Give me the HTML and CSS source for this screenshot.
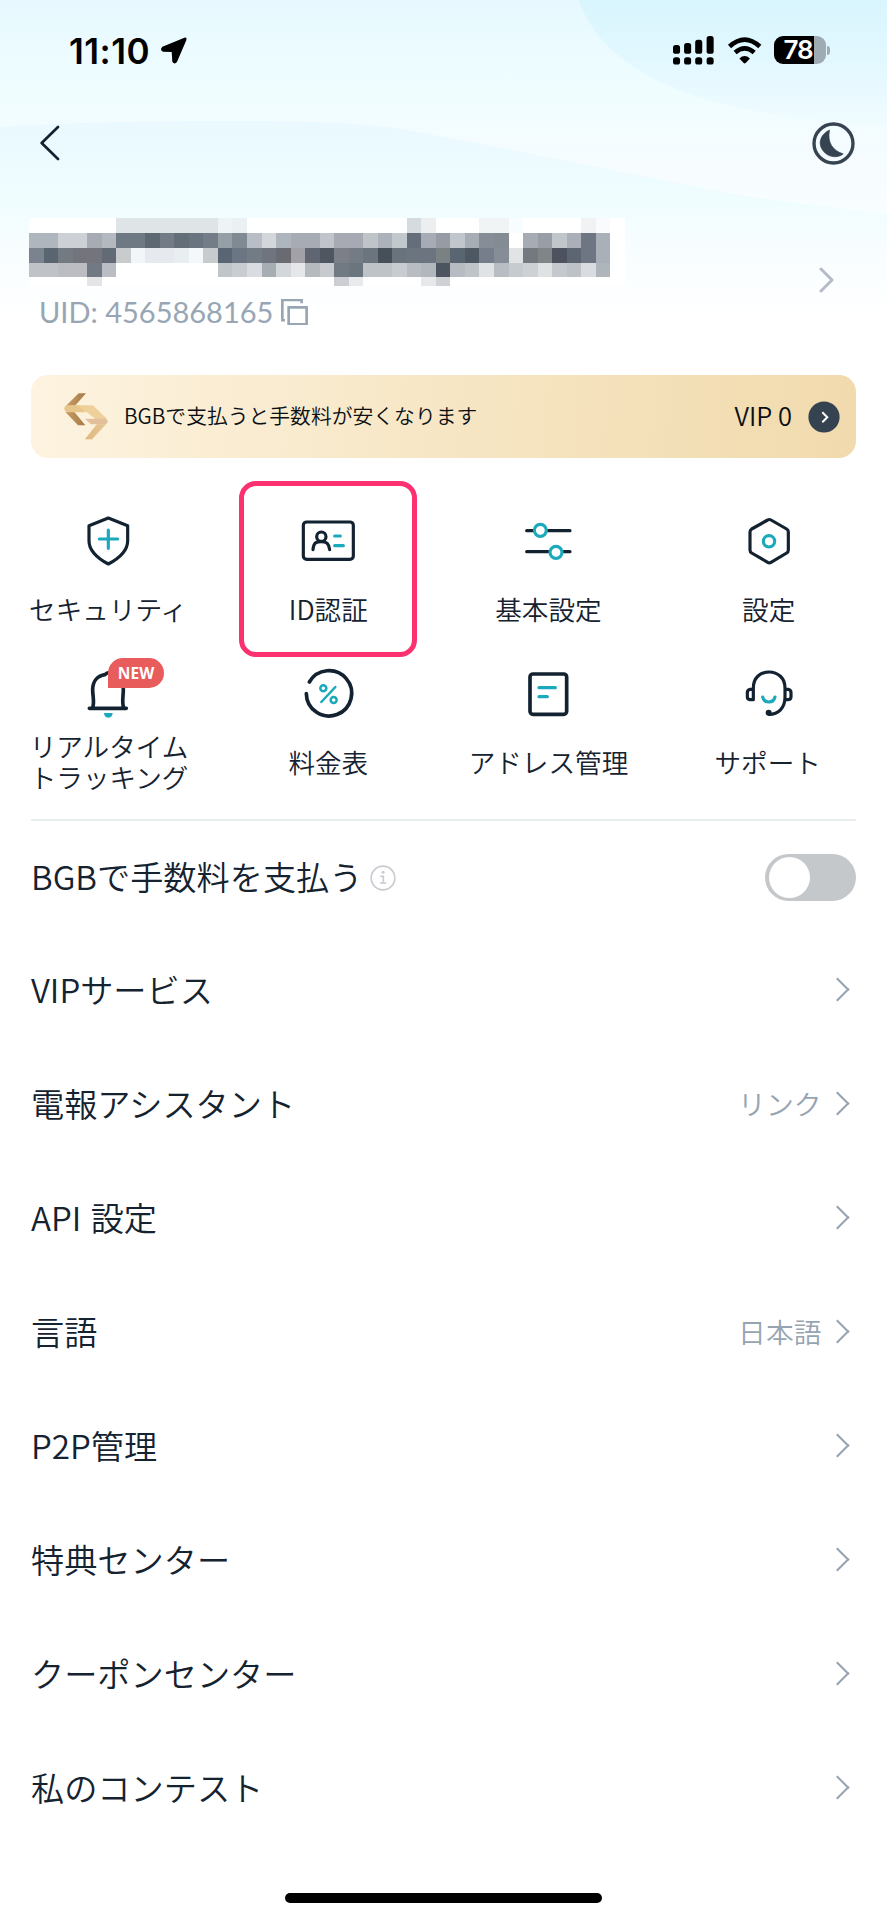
FILE: index.html
```html
<!DOCTYPE html>
<html lang="ja">
<head>
<meta charset="utf-8">
<title>アカウント</title>
<link rel="stylesheet" href="styles.css">
</head>
<body>
<div class="screen">
  <svg class="backdrop" viewBox="0 0 887 330" width="887" height="330" aria-hidden="true">
    <defs>
      <linearGradient id="sky" x1="0" y1="0" x2="0" y2="1"><stop offset="0" stop-color="#e7f9ff"/><stop offset=".28" stop-color="#effdff"/><stop offset=".45" stop-color="#f5fcff"/><stop offset=".95" stop-color="#fff"/></linearGradient>
      <linearGradient id="wave" gradientUnits="userSpaceOnUse" x1="0" y1="120" x2="0" y2="320"><stop offset="0" stop-color="#eaf9ff"/><stop offset=".4" stop-color="#effdff"/><stop offset=".6" stop-color="#f7fdff"/><stop offset="1" stop-color="#fff"/></linearGradient>
      <linearGradient id="orb" gradientUnits="userSpaceOnUse" x1="0" y1="0" x2="0" y2="130"><stop offset="0" stop-color="#d9f5fe"/><stop offset=".5" stop-color="#e3f8ff"/><stop offset="1" stop-color="#f1fcff"/></linearGradient>
    </defs>
    <rect width="887" height="330" fill="url(#sky)"/>
    <path d="M578 0C595 42 625 68 679 90C740 113 810 122 887 124V0Z" fill="url(#orb)"/>
    <path d="M0 127C70 122 150 121 226 121C300 121 350 122 400 129C520 150 640 177 740 195C800 204 850 209 887 214V330H0Z" fill="url(#wave)"/>
  </svg>

  <header class="status">
    <span class="clock">11:10</span>
    <svg class="locate" viewBox="0 0 81 81" width="27" height="27"><path d="M74 4L8 31Q2 38 9 42L37 43L39 74Q44 81 49 74L77 9Q79 2 74 4Z" fill="#000" stroke="#000" stroke-width="4" stroke-linejoin="round"/></svg>
    <svg class="signal" viewBox="66 47 122 86" width="41" height="29"><g fill="#000"><rect x="66" y="74" width="21" height="26" rx="8"/><rect x="99" y="68" width="21" height="32" rx="8"/><rect x="132" y="58" width="21" height="42" rx="8"/><rect x="166" y="47" width="21" height="53" rx="8"/><rect x="66" y="110" width="21" height="22" rx="8"/><rect x="99" y="110" width="21" height="22" rx="8"/><rect x="132" y="110" width="21" height="22" rx="8"/><rect x="166" y="110" width="21" height="22" rx="8"/></g></svg>
    <svg class="wifi" viewBox="226 48 105 82" width="35" height="27"><path d="M233 77Q279 35 325 77M250 95Q279 70 308 95" fill="none" stroke="#000" stroke-width="14"/><path d="M263 113Q279 99 295 113L282 127Q279 130 276 127Z"/></svg>
    <span class="battery"><span class="battery-body"><span class="battery-num">78</span></span><span class="battery-nub"></span></span>
  </header>

  <nav class="nav">
    <svg viewBox="60 315 60 108" width="20" height="36"><path d="M114 321L65 369L114 417" fill="none" stroke="#142130" stroke-width="8" stroke-linecap="round" stroke-linejoin="round"/></svg>
    <svg viewBox="485 305 128 128" width="43" height="43"><circle cx="549" cy="369" r="58" fill="none" stroke="#364350" stroke-width="10"/><path d="M537 329C530 366 546 390 578 400C563 412 540 411 525 398C500 376 506 344 537 329Z" fill="#364350" stroke="#364350" stroke-width="2" stroke-linejoin="round"/></svg>
  </nav>

  <section class="profile">
    <div class="profile-info">
      <div class="mosaic" id="mosaic"></div>
      <div class="uid"><span>UID: 4565868165</span>
        <svg viewBox="843 299 82 80" width="27.3" height="26.6"><path d="M855 363H847V302H905V312M866 324H920V375H866Z" fill="none" stroke="#98a6b4" stroke-width="8"/></svg>
      </div>
    </div>
    <svg class="profile-go" viewBox="0 0 16 26" width="16" height="26"><path d="M2 2L13 13L2 24" fill="none" stroke="#b4bbc6" stroke-width="3" stroke-linecap="round" stroke-linejoin="round"/></svg>
  </section>

  <section class="banner">
    <svg class="banner-logo" viewBox="192 101 132 140" width="44" height="46.6">
      <defs><linearGradient id="br" x1="0" x2="1"><stop offset="0" stop-color="#c89d66"/><stop offset="1" stop-color="#a57a47"/></linearGradient><linearGradient id="gd" x1="0" x2="1"><stop offset="0" stop-color="#e2bd80"/><stop offset="1" stop-color="#f3dcb5"/></linearGradient></defs>
      <path d="M198 139L236 102H258L225 139Z" fill="url(#br)"/>
      <path d="M196 158H223L256 198H234Z" fill="url(#br)"/>
      <path d="M198 138H240L258 159H200Q186 150 198 138Z" fill="#e6c68a"/>
      <path d="M232 138H279L322 180H288Z" fill="#eed09b"/>
      <path d="M255 178H318Q328 186 318 195H273Z" fill="#e3c09c"/>
      <path d="M291 195H318L276 240H255Z" fill="url(#gd)"/><path d="M291 195H318L276 240H255Z" fill="#ddb57d" opacity=".55"/>
    </svg>
    <span class="banner-text">BGBで支払うと手数料が安くなります</span>
    <span class="vip">VIP 0</span>
    <svg viewBox="0 0 32 32" width="32" height="32"><circle cx="16" cy="16" r="15.6" fill="#354250"/><path d="M14.3 11.3L19.3 16.3L14.3 21.3" fill="none" stroke="#fff" stroke-width="2"/></svg>
  </section>

  <section class="shortcuts">
    <div class="shortcut">
      <svg class="icon" viewBox="240 130 168 168"><path class="ink" d="M325 145L383 168V213C383 245 355 267 325 283C295 267 267 245 267 213V168Z"/><path class="teal" d="M298 208H353M325 181V236"/></svg>
      <span class="label">セキュリティ</span>
    </div>
    <div class="shortcut marked">
      <svg class="icon" viewBox="901 130 168 168"><rect class="ink" x="911" y="157" width="150" height="112" rx="10"/><circle class="ink" cx="965" cy="201" r="14"/><path class="ink" d="M940 240C942 216 953 216 965 216S988 218 990 240"/><path class="teal" d="M1005 199H1022M1005 228H1031"/></svg>
      <span class="label">ID認証</span>
    </div>
    <div class="shortcut">
      <svg class="icon" viewBox="229 130 168 168"><path class="ink" d="M249 183H268M313 183H379M249 246H314M360 246H379"/><circle class="teal" cx="290" cy="182" r="18"/><circle class="teal" cx="337" cy="248" r="18"/></svg>
      <span class="label">基本設定</span>
    </div>
    <div class="shortcut">
      <svg class="icon" viewBox="890 130 168 168"><path class="ink" d="M970 151Q975 148 980 151L1027 178Q1032 181 1032 187V241Q1032 247 1027 250L980 278Q975 281 970 278L922 250Q917 247 917 241V187Q917 181 922 178Z"/><circle class="teal" cx="974" cy="215" r="17"/></svg>
      <span class="label">設定</span>
    </div>
    <div class="shortcut">
      <svg class="icon" viewBox="240 589 168 168"><path class="ink thick" d="M268 716H379M278 714C284 696 278 680 278 660C278 633 294 618 315 615Q324 604 333 615C356 618 370 633 370 660C370 680 365 696 371 714"/><path d="M312 730H338Q337 744 325 744T312 730Z" fill="#1ba9bb"/></svg>
      <span class="badge">NEW</span>
      <span class="label two-line">リアルタイム<br>トラッキング</span>
    </div>
    <div class="shortcut">
      <svg class="icon" viewBox="901 589 168 168"><path class="ink thick" d="M929 637A68 68 0 1 1 920 672"/><path class="teal thin" d="M1007 652L965 697"/><circle class="teal thin" cx="971" cy="656" r="9"/><circle class="teal thin" cx="1002" cy="691" r="9"/></svg>
      <span class="label">料金表</span>
    </div>
    <div class="shortcut">
      <svg class="icon" viewBox="229 589 168 168"><rect class="ink thick" x="259" y="613" width="110" height="121" rx="9"/><path class="teal" d="M286 654H335M286 681H311"/></svg>
      <span class="label">アドレス管理</span>
    </div>
    <div class="shortcut">
      <svg class="icon" viewBox="890 589 168 168"><path class="ink" d="M927 689V655C927 625 947 607 974 607S1022 625 1022 655V682C1022 715 1002 734 974 734M927 659H917Q909 661 909 669V681Q909 689 917 690H927M1022 659H1032Q1040 661 1040 669V681Q1040 689 1032 690H1022"/><circle cx="973" cy="729" r="9" fill="#132231"/><path class="teal" d="M955 682C960 702 987 702 992 682"/></svg>
      <span class="label shift">サポート</span>
    </div>
  </section>

  <main class="list">
    <div class="row"><span class="name">BGBで手数料を支払う</span>
      <svg class="info" viewBox="0 0 78 78" width="26" height="26"><circle cx="39" cy="39" r="35.5" fill="none" stroke="#c8ccd0" stroke-width="5"/><circle cx="39" cy="22" r="4.5" fill="#c8ccd0"/><path d="M31 34H40V54M30 54H49" fill="none" stroke="#c8ccd0" stroke-width="5"/></svg>
      <span class="toggle"><span class="knob"></span></span></div>
    <div class="row"><span class="name">VIPサービス</span><span class="value"></span><span class="chev"></span></div>
    <div class="row"><span class="name">電報アシスタント</span><span class="value">リンク</span><span class="chev"></span></div>
    <div class="row"><span class="name wide">API 設定</span><span class="value"></span><span class="chev"></span></div>
    <div class="row"><span class="name">言語</span><span class="value">日本語</span><span class="chev"></span></div>
    <div class="row"><span class="name">P2P管理</span><span class="value"></span><span class="chev"></span></div>
    <div class="row"><span class="name">特典センター</span><span class="value"></span><span class="chev"></span></div>
    <div class="row"><span class="name">クーポンセンター</span><span class="value"></span><span class="chev"></span></div>
    <div class="row"><span class="name">私のコンテスト</span><span class="value"></span><span class="chev"></span></div>
  </main>
  <footer class="home"><span class="home-bar"></span></footer>
</div>
<script src="app.js"></script>
</body>
</html>
```
FILE: styles.css
```css
*, *::after { box-sizing: border-box; }
body {
  margin: 0;
  background: #fff;
  color: #15222f;
  font-family: "Noto Sans CJK JP", "Noto Sans", sans-serif;
  font-weight: 350;
}
svg { display: block; flex: none; }
.screen {
  position: relative;
  width: 887px;
  height: 1920px;
  overflow: hidden;
  display: flex;
  flex-direction: column;
}
.backdrop { position: absolute; top: 0; left: 0; z-index: -1; }

.status {
  height: 102px;
  padding: 0 57px 2px 69px;
  display: flex;
  align-items: center;
  color: #000;
}
.clock {
  width: 91px;
  padding-top: 1px;
  font: 600 35px/40px Inter, sans-serif;
  letter-spacing: 0.5px;
}
.signal { margin-left: auto; margin-right: 13px; }
.wifi { margin-right: 12px; }
.battery { display: flex; align-items: center; gap: 1.5px; }
.battery-body {
  width: 52px;
  height: 28px;
  border-radius: 9px;
  background: linear-gradient(90deg, #000 40.5px, #9eabb3 40.5px);
  display: flex;
  align-items: center;
  padding-left: 10px;
}
.battery-num { color: #fff; font: 600 26px/28px Inter, sans-serif; letter-spacing: -1px; }
.battery-nub { width: 3px; height: 9px; border-radius: 0 3px 3px 0; background: #9eabb3; }

.nav {
  height: 82px;
  padding: 0 32px 0 40px;
  display: flex;
  align-items: center;
  justify-content: space-between;
}

.profile {
  height: 191px;
  padding: 34px 52px 0 29px;
  display: flex;
  justify-content: space-between;
}
.mosaic {
  width: 596px;
  height: 67.5px;
  display: grid;
  grid-template-columns: repeat(41, 14.54px);
  grid-template-rows: 15px 15px 14.5px 14.5px 8.5px;
}
.uid {
  margin: 9px 0 0 10px;
  height: 35px;
  display: flex;
  align-items: center;
  gap: 8px;
  color: #98a6b4;
  font: 400 29px/35px Lato, sans-serif;
}
.uid span { padding-bottom: 2px; }
.profile-go { margin-top: 49px; }

.banner {
  height: 83px;
  margin: 0 31px;
  padding: 0 16px 0 33px;
  border-radius: 17px;
  background: linear-gradient(95deg, #fdf3e0, #f6e5c2 55%, #f1daad);
  display: flex;
  align-items: center;
  color: #0b0f14;
}
.banner-text { margin-left: 16px; padding-bottom: 3px; font-size: 20.8px; line-height: 30px; }
.vip { margin-left: auto; margin-right: 16px; padding-bottom: 3px; font-size: 25.5px; line-height: 36px; }

.shortcuts {
  margin: 22px 0 0 -2px;
  display: grid;
  grid-template-columns: repeat(4, 220.2px);
  grid-auto-rows: 153px;
}
.shortcut {
  position: relative;
  display: flex;
  flex-direction: column;
  align-items: center;
  padding-top: 33px;
}
.icon { width: 56px; height: 56px; }
.ink, .teal { fill: none; stroke: #132231; stroke-width: 9.5; stroke-linecap: round; stroke-linejoin: round; }
.teal { stroke: #1ba9bb; }
.thick { stroke-width: 11; }
.thin { stroke-width: 7.5; }
.label {
  height: 31px;
  margin-top: 24px;
  font-size: 26.6px;
  line-height: 31px;
  white-space: nowrap;
}
.two-line { margin: 8px 0 0 2px; height: 62px; }
.shift { margin-left: -2px; }
.marked::after {
  content: "";
  position: absolute;
  left: 20.5px;
  top: 1px;
  width: 178.5px;
  height: 176px;
  border: 5px solid #fc3270;
  border-radius: 17px;
}
.badge {
  position: absolute;
  left: 110px;
  top: 25px;
  width: 56px;
  height: 30px;
  border-radius: 15px 15px 15px 0;
  background: #e85c5c;
  color: #fff;
  font: 700 15.5px/30px "Noto Sans", sans-serif;
  text-align: center;
}

.list {
  margin: 33px 31px 0;
  border-top: 2px solid #e9eeee;
  display: grid;
  grid-template-rows: 111px;
  grid-auto-rows: 114.05px;
}
.row { display: flex; align-items: center; }
.name { padding-bottom: 1px; font-size: 33.2px; line-height: 48px; white-space: pre; }
.wide { word-spacing: 2px; }
.value { margin-left: auto; font-size: 27.8px; line-height: 40px; color: #96a4b2; }
.info { margin: 3px 0 0 8px; }
.toggle {
  margin-left: auto;
  margin-top: 1px;
  width: 91px;
  height: 47px;
  padding: 3px 4px;
  border-radius: 24px;
  background: #c5c8cb;
}
.knob { display: block; width: 41px; height: 41px; border-radius: 50%; background: #fff; }
.chev {
  width: 17px;
  height: 17px;
  margin: 0 10px 0 7.5px;
  border: solid #95a3b1;
  border-width: 2.5px 2.5px 0 0;
  transform: rotate(45deg);
}

.home { margin-top: auto; height: 27px; display: flex; justify-content: center; }
.home-bar { width: 317px; height: 10px; border-radius: 5px; background: #000; }
```
FILE: app.js
```js
// Censored account name: five strips of colour runs, each run "hex*count".
const strips = [
  "fff*6 dfe4e7*7 eef4f6 ebf0f2 fff*11 d6dbdf eceeef fff*3 f1f4f5*2 f8fdff fff*4 f1f2f3 fafbfc fff",
  "b0b6be*2 cdd1d5*2 a6abb4 b3b9be 6f7983*2 5d6873 737b86 636e79 697480 737d87 979fa6 7f8a92 b9bec6 d3d7db afb5bd a7abb4*2 c1c5cb a7aab3*2 bfc4c9 abb2ba c3c8cc 636e7a a7abb5 979ba3 c1c5cc a7adb5 868d97 838b93 fff a7abb3 999da5 c1c6ca abb0b8 6d7682 a9b0b7 fff",
  "7b848e 5a6572 737a82 74747d*2 626a75 c9cccd f3f6f8 e6eaee*2 e9eef1 f4f8fa c7cbce 596572 6b7682 737b84 70747f 6a6a73 a3a1a8 5f6672 4f5660 7c7e88 757b84 6b757d 474f58 69737c 6c7480*2 7b8083 5a6572 4d5862 757e8a 868d97 e1e3e4 747980 808587 4d525e 5c6572 6d7682 a9b0b7 fff",
  "bfc3c8*2 bbbdc3*2 717a84 babdc4 fff*7 bfc5c9 c9cdd2 d9dce0 a6adb3 d3d6da e6e7e9 b5babf c7cbcf 717983 6a757d bdc3c6*2 c8ccd0 b9bdc3 b1b7bc 4c5460 b6bcc2 bfc4c8 e0e3e6 b7bdc2 c6cbcf cdd1d4 dfe1e3 c5c9cd bdc1c8 d9dce0 afb6bb fff",
  "fff*4 e5e5e8 fff*16 cdced3 e9eaec fff*4 e7e8ea cfd1d4 fff*12"
];
const mosaic = document.getElementById("mosaic");
for (const strip of strips) {
  for (const run of strip.split(" ")) {
    const [hex, count = 1] = run.split("*");
    const cell = document.createElement("span");
    cell.style.background = "#" + hex;
    cell.style.gridColumn = "span " + count;
    mosaic.append(cell);
  }
}
```
